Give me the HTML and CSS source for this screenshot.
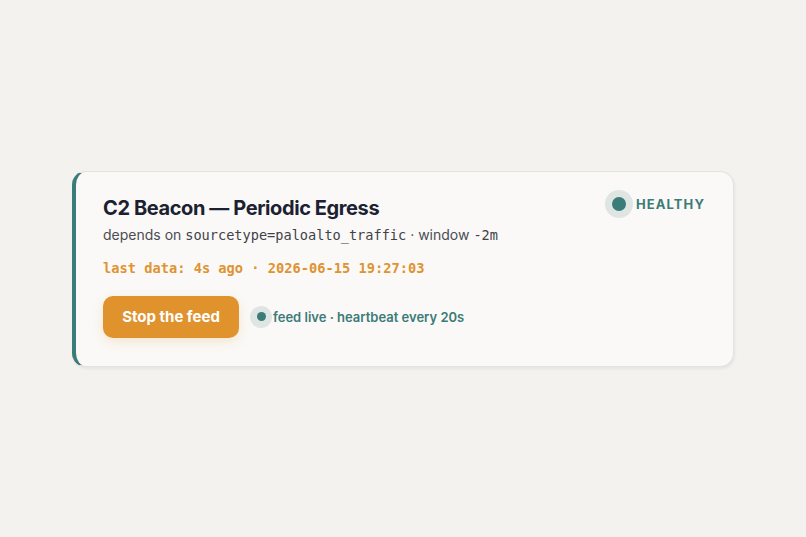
FILE: index.html
```html
<!DOCTYPE html>
<html lang="en">
<head>
<meta charset="UTF-8">
<meta name="viewport" content="width=device-width, initial-scale=1.0">
<title>Detection health</title>
<link rel="stylesheet" href="styles.css">
</head>
<body>

<div class="card">
  <div class="card-head">
    <div>
      <h1 class="title">C2 Beacon — Periodic Egress</h1>
      <div class="sub">depends on <code>sourcetype=paloalto_traffic</code> · window <code>-2m</code></div>
    </div>
    <div class="status"><span class="halo big"><span class="dot"></span></span>HEALTHY</div>
  </div>
  <div class="last">last data: 4s ago · 2026-06-15 19:27:03</div>
  <div class="actions">
    <button class="stop">Stop the feed</button>
    <div class="live"><span class="halo"><span class="dot"></span></span>feed live · heartbeat every 20s</div>
  </div>
</div>

</body>
</html>
```

FILE: styles.css
```css
body { background: #f3f2ef; margin: 0; height: 100vh; display: flex; align-items: center; justify-content: center; font-family: Inter, "Noto Sans", sans-serif; color: #1c2230; }
.card { width: 602px; background: #faf9f7; border: 1px solid #e4e2dd; border-left: 4px solid #3b7b78; border-radius: 14px; padding: 22px 28px 28px 27px; box-shadow: 1px 2px 3px rgba(0,0,0,0.06); }
.card-head { display: flex; justify-content: space-between; align-items: flex-start; }
.title { font-size: 20px; font-weight: 700; margin: 2px 0 6px; letter-spacing: -0.4px; color: #1b2130; }
.sub { font-size: 14px; color: #4a4d55; }
.sub code { font-family: "DejaVu Sans Mono", monospace; font-size: 13.6px; color: #3f4249; }
.status { display: flex; align-items: center; gap: 3px; font-size: 13px; font-weight: 700; letter-spacing: 1.1px; color: #3b7b78; margin-top: -4px; }
.halo { width: 22px; height: 22px; border-radius: 50%; background: #dfe5e3; display: flex; align-items: center; justify-content: center; }
.halo .dot { width: 9px; height: 9px; border-radius: 50%; background: #3b7b78; }
.halo.big { width: 28px; height: 28px; }
.halo.big .dot { width: 14px; height: 14px; }
.last { font-family: "DejaVu Sans Mono", monospace; font-weight: 700; font-size: 13.7px; color: #df9332; margin-top: 17px; }
.actions { display: flex; align-items: center; gap: 11px; margin-top: 20px; }
.stop { background: #e0922d; color: #fff; border: none; border-radius: 10px; font-family: Inter, sans-serif; font-weight: 700; font-size: 15px; width: 136px; height: 42px; box-shadow: 0 4px 12px rgba(224,146,45,0.18); }
.live { display: flex; align-items: center; gap: 1px; font-size: 13px; font-weight: 600; color: #3b7b78; }
```
